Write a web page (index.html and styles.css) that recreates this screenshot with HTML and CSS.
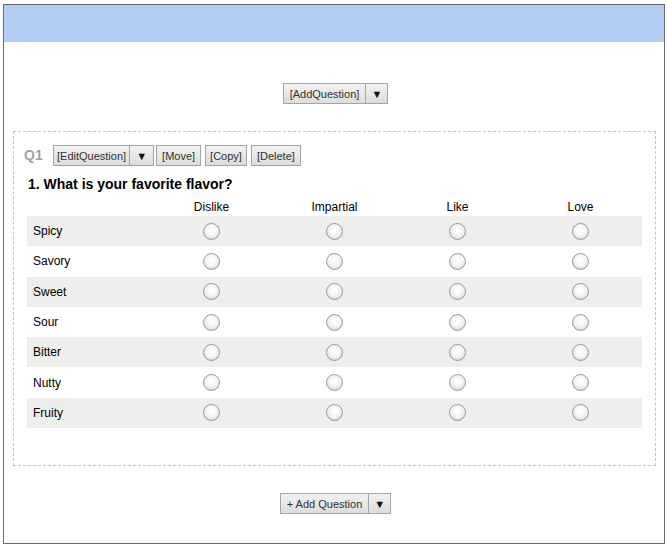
FILE: index.html
```html
<!DOCTYPE html>
<html>
<head>
<meta charset="utf-8">
<link rel="stylesheet" href="styles.css">
</head>
<body>
<div class="frame">
  <div class="header"></div>
  <div class="add-row top">
    <div class="split">
      <span class="btn main">[AddQuestion]</span><span class="btn caret">&#9660;</span>
    </div>
  </div>
  <div class="qbox">
    <div class="toolbar">
      <span class="qnum">Q1</span>
      <div class="split">
        <span class="btn main edit">[EditQuestion]</span><span class="btn caret">&#9660;</span>
      </div>
      <span class="btn">[Move]</span>
      <span class="btn narrow">[Copy]</span>
      <span class="btn">[Delete]</span>
    </div>
    <div class="qtitle">1. What is your favorite flavor?</div>
    <div class="matrix">
      <div class="mrow head">
        <div class="cell label"></div>
        <div class="cell">Dislike</div>
        <div class="cell">Impartial</div>
        <div class="cell">Like</div>
        <div class="cell">Love</div>
      </div>
      <div class="mrow alt"><div class="cell label">Spicy</div><div class="cell"><span class="radio"></span></div><div class="cell"><span class="radio"></span></div><div class="cell"><span class="radio"></span></div><div class="cell"><span class="radio"></span></div></div>
      <div class="mrow"><div class="cell label">Savory</div><div class="cell"><span class="radio"></span></div><div class="cell"><span class="radio"></span></div><div class="cell"><span class="radio"></span></div><div class="cell"><span class="radio"></span></div></div>
      <div class="mrow alt"><div class="cell label">Sweet</div><div class="cell"><span class="radio"></span></div><div class="cell"><span class="radio"></span></div><div class="cell"><span class="radio"></span></div><div class="cell"><span class="radio"></span></div></div>
      <div class="mrow"><div class="cell label">Sour</div><div class="cell"><span class="radio"></span></div><div class="cell"><span class="radio"></span></div><div class="cell"><span class="radio"></span></div><div class="cell"><span class="radio"></span></div></div>
      <div class="mrow alt"><div class="cell label">Bitter</div><div class="cell"><span class="radio"></span></div><div class="cell"><span class="radio"></span></div><div class="cell"><span class="radio"></span></div><div class="cell"><span class="radio"></span></div></div>
      <div class="mrow"><div class="cell label">Nutty</div><div class="cell"><span class="radio"></span></div><div class="cell"><span class="radio"></span></div><div class="cell"><span class="radio"></span></div><div class="cell"><span class="radio"></span></div></div>
      <div class="mrow alt"><div class="cell label">Fruity</div><div class="cell"><span class="radio"></span></div><div class="cell"><span class="radio"></span></div><div class="cell"><span class="radio"></span></div><div class="cell"><span class="radio"></span></div></div>
    </div>
  </div>
  <div class="add-row bottom">
    <div class="split">
      <span class="btn main">+ Add Question</span><span class="btn caret">&#9660;</span>
    </div>
  </div>
</div>
</body>
</html>
```
FILE: styles.css
```css
html, body {
  margin: 0;
  padding: 0;
  background: #fff;
}
body {
  font-family: "Liberation Sans", Arial, sans-serif;
  font-size: 12px;
  color: #000;
}
.frame {
  box-sizing: border-box;
  margin: 4px 0 0 3px;
  width: 662px;
  height: 540px;
  border: 1px solid #6b6b6b;
}
.header {
  height: 37px;
  background: #b3cef3;
}
.add-row {
  display: flex;
  justify-content: center;
  padding-left: 3px;
}
.add-row.top {
  padding-top: 41px;
}
.add-row.bottom {
  padding-top: 27px;
}
.split {
  display: flex;
}
.btn {
  box-sizing: border-box;
  display: inline-flex;
  align-items: center;
  justify-content: center;
  height: 21px;
  padding: 0 5px;
  border: 1px solid #a5a5a5;
  background: linear-gradient(#f2f2f2, #dcdcdc);
  color: #333;
  font-size: 11px;
  white-space: nowrap;
}
.btn.edit {
  padding: 0 3px;
}
.btn.narrow {
  padding: 0 4px;
}
.add-row .btn {
  font-size: 11px;
  padding: 0 6px;
}
.split .caret {
  border-left: none;
  width: 24px;
  padding: 0;
  font-size: 11px;
  color: #111;
}
.add-row .split .caret {
  width: 22px;
  padding: 0;
  font-size: 11px;
}
.qbox {
  margin: 27px 8px 0 9px;
  border: 1px dashed #c4c4c4;
  padding: 13px 13px 36px 13px;
  height: 335px;
  box-sizing: border-box;
}
.toolbar {
  display: flex;
  align-items: center;
  gap: 4px;
  margin-left: -3px;
}
.qnum {
  color: #a0a0a0;
  font-weight: bold;
  font-size: 14px;
  width: 25px;
  margin-top: -2px;
}
.toolbar .split {
  margin-right: -2px;
}
.qtitle {
  font-weight: bold;
  font-size: 14px;
  margin-top: 10px;
  padding-left: 1px;
  line-height: 17px;
}
.matrix {
  margin-top: 5px;
}
.mrow {
  display: grid;
  grid-template-columns: repeat(5, 1fr);
  height: 30.3px;
  align-items: center;
}
.mrow.head {
  height: 18px;
  align-items: center;
}
.mrow.alt {
  background: #eeeeec;
}
.cell {
  text-align: center;
  display: flex;
  justify-content: center;
  align-items: center;
}
.mrow.head .cell {
  display: block;
  line-height: 14px;
}
.cell.label {
  justify-content: flex-start;
  padding-left: 6px;
}
.radio {
  display: block;
  width: 15px;
  height: 15px;
  border-radius: 50%;
  border: 1px solid #9a9a9a;
  background: radial-gradient(circle at 50% 40%, #ffffff 0%, #f6f6f6 40%, #dcdcdc 100%);
  box-shadow: inset 0 -1px 1px rgba(0,0,0,0.08);
}
```
